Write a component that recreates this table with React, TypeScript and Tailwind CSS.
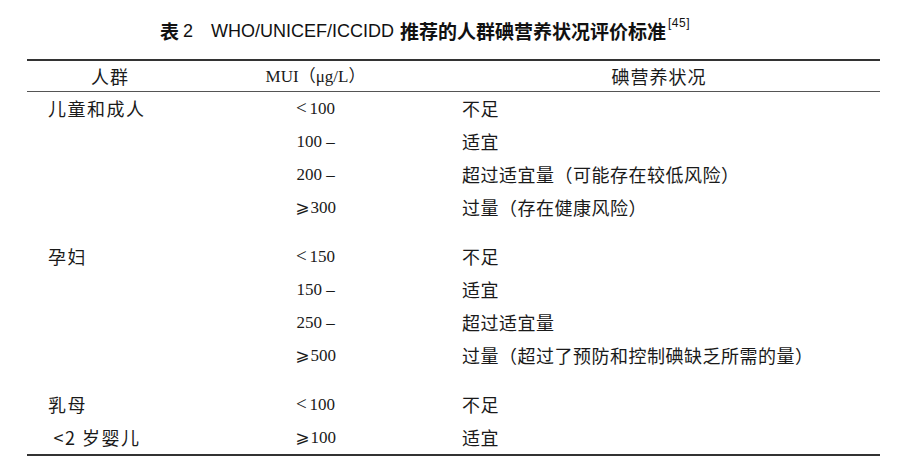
import React from "react";

interface Row {
  group: string;
  mui: React.ReactNode;
  status: string;
}

const Lt = ({ n }: { n: string }) => (
  <>
    <span className="text-[19px] leading-none">&lt;</span>
    <span className="ml-[3px]">{n}</span>
  </>
);

const Ge = ({ n }: { n: string }) => (
  <>
    <span className="font-['DejaVu_Serif','DejaVu_Sans',serif] text-[17px]">⩾</span>
    <span className="ml-[1px]">{n}</span>
  </>
);

const groups: Row[][] = [
  [
    { group: "儿童和成人", mui: <Lt n="100" />, status: "不足" },
    { group: "", mui: "100 –", status: "适宜" },
    { group: "", mui: "200 –", status: "超过适宜量（可能存在较低风险）" },
    { group: "", mui: <Ge n="300" />, status: "过量（存在健康风险）" },
  ],
  [
    { group: "孕妇", mui: <Lt n="150" />, status: "不足" },
    { group: "", mui: "150 –", status: "适宜" },
    { group: "", mui: "250 –", status: "超过适宜量" },
    { group: "", mui: <Ge n="500" />, status: "过量（超过了预防和控制碘缺乏所需的量）" },
  ],
  [
    { group: "乳母", mui: <Lt n="100" />, status: "不足" },
    { group: " <2 岁婴儿", mui: <Ge n="100" />, status: "适宜" },
  ],
];

export default function App() {
  return (
    <div className="w-[900px] h-[476px] bg-white text-[#1a1a1a] overflow-hidden">
      {/* Title */}
      <div className="pt-[20px] h-[42px] flex items-start pl-[160px] text-[#111]">
        <div className="flex items-start leading-[22px] text-[18px]">
          <span className="font-['Noto_Sans_CJK_SC',sans-serif] font-bold text-[19px]">表</span>
          <span className="font-['Liberation_Sans',sans-serif] ml-[4px] w-[28px]">2</span>
          <span className="font-['Liberation_Sans',sans-serif]">WHO/UNICEF/ICCIDD</span>
          <span className="font-['Noto_Sans_CJK_SC',sans-serif] font-bold text-[19px] ml-[6px]">
            推荐的人群碘营养状况评价标准
          </span>
          <span className="font-['Liberation_Sans',sans-serif] text-[12px] leading-[12px] -mt-[3px] ml-[2px] tracking-[0.5px]">
            [45]
          </span>
        </div>
      </div>

      {/* Table */}
      <div className="mt-[17px] ml-[27px] w-[853px] border-t-2 border-b-2 border-[#333]">
        <div className="grid grid-cols-[166px_245px_1fr] h-[31px] items-center border-b-[1.5px] border-[#555]">
          <div className="font-['Noto_Sans_CJK_SC',sans-serif] text-center text-[18px] tracking-[1px]">人群</div>
          <div className="font-['Liberation_Serif','Noto_Sans_CJK_SC',serif] text-center text-[17px]">
            MUI<span className="font-['Noto_Sans_CJK_SC',sans-serif]">（</span>μg/L
            <span className="font-['Noto_Sans_CJK_SC',sans-serif]">）</span>
          </div>
          <div className="font-['Noto_Sans_CJK_SC',sans-serif] text-center text-[18px] tracking-[1px]">碘营养状况</div>
        </div>

        <div className="flex flex-col gap-[16px]">
          {groups.map((rows, gi) => (
            <div key={gi} className="flex flex-col">
              {rows.map((r, ri) => (
                <div key={ri} className="grid grid-cols-[166px_245px_1fr] h-[33px] items-center">
                  <div className="font-['Noto_Sans_CJK_SC',sans-serif] pl-[21px] text-[18px] tracking-[1.5px] whitespace-pre">
                    {r.group}
                  </div>
                  <div className="font-['Liberation_Serif','Noto_Sans_CJK_SC',serif] text-center text-[17px]">
                    {r.mui}
                  </div>
                  <div className="font-['Noto_Sans_CJK_SC',sans-serif] pl-[24px] text-[18px] tracking-[0.5px]">
                    {r.status}
                  </div>
                </div>
              ))}
            </div>
          ))}
        </div>
      </div>
    </div>
  );
}
